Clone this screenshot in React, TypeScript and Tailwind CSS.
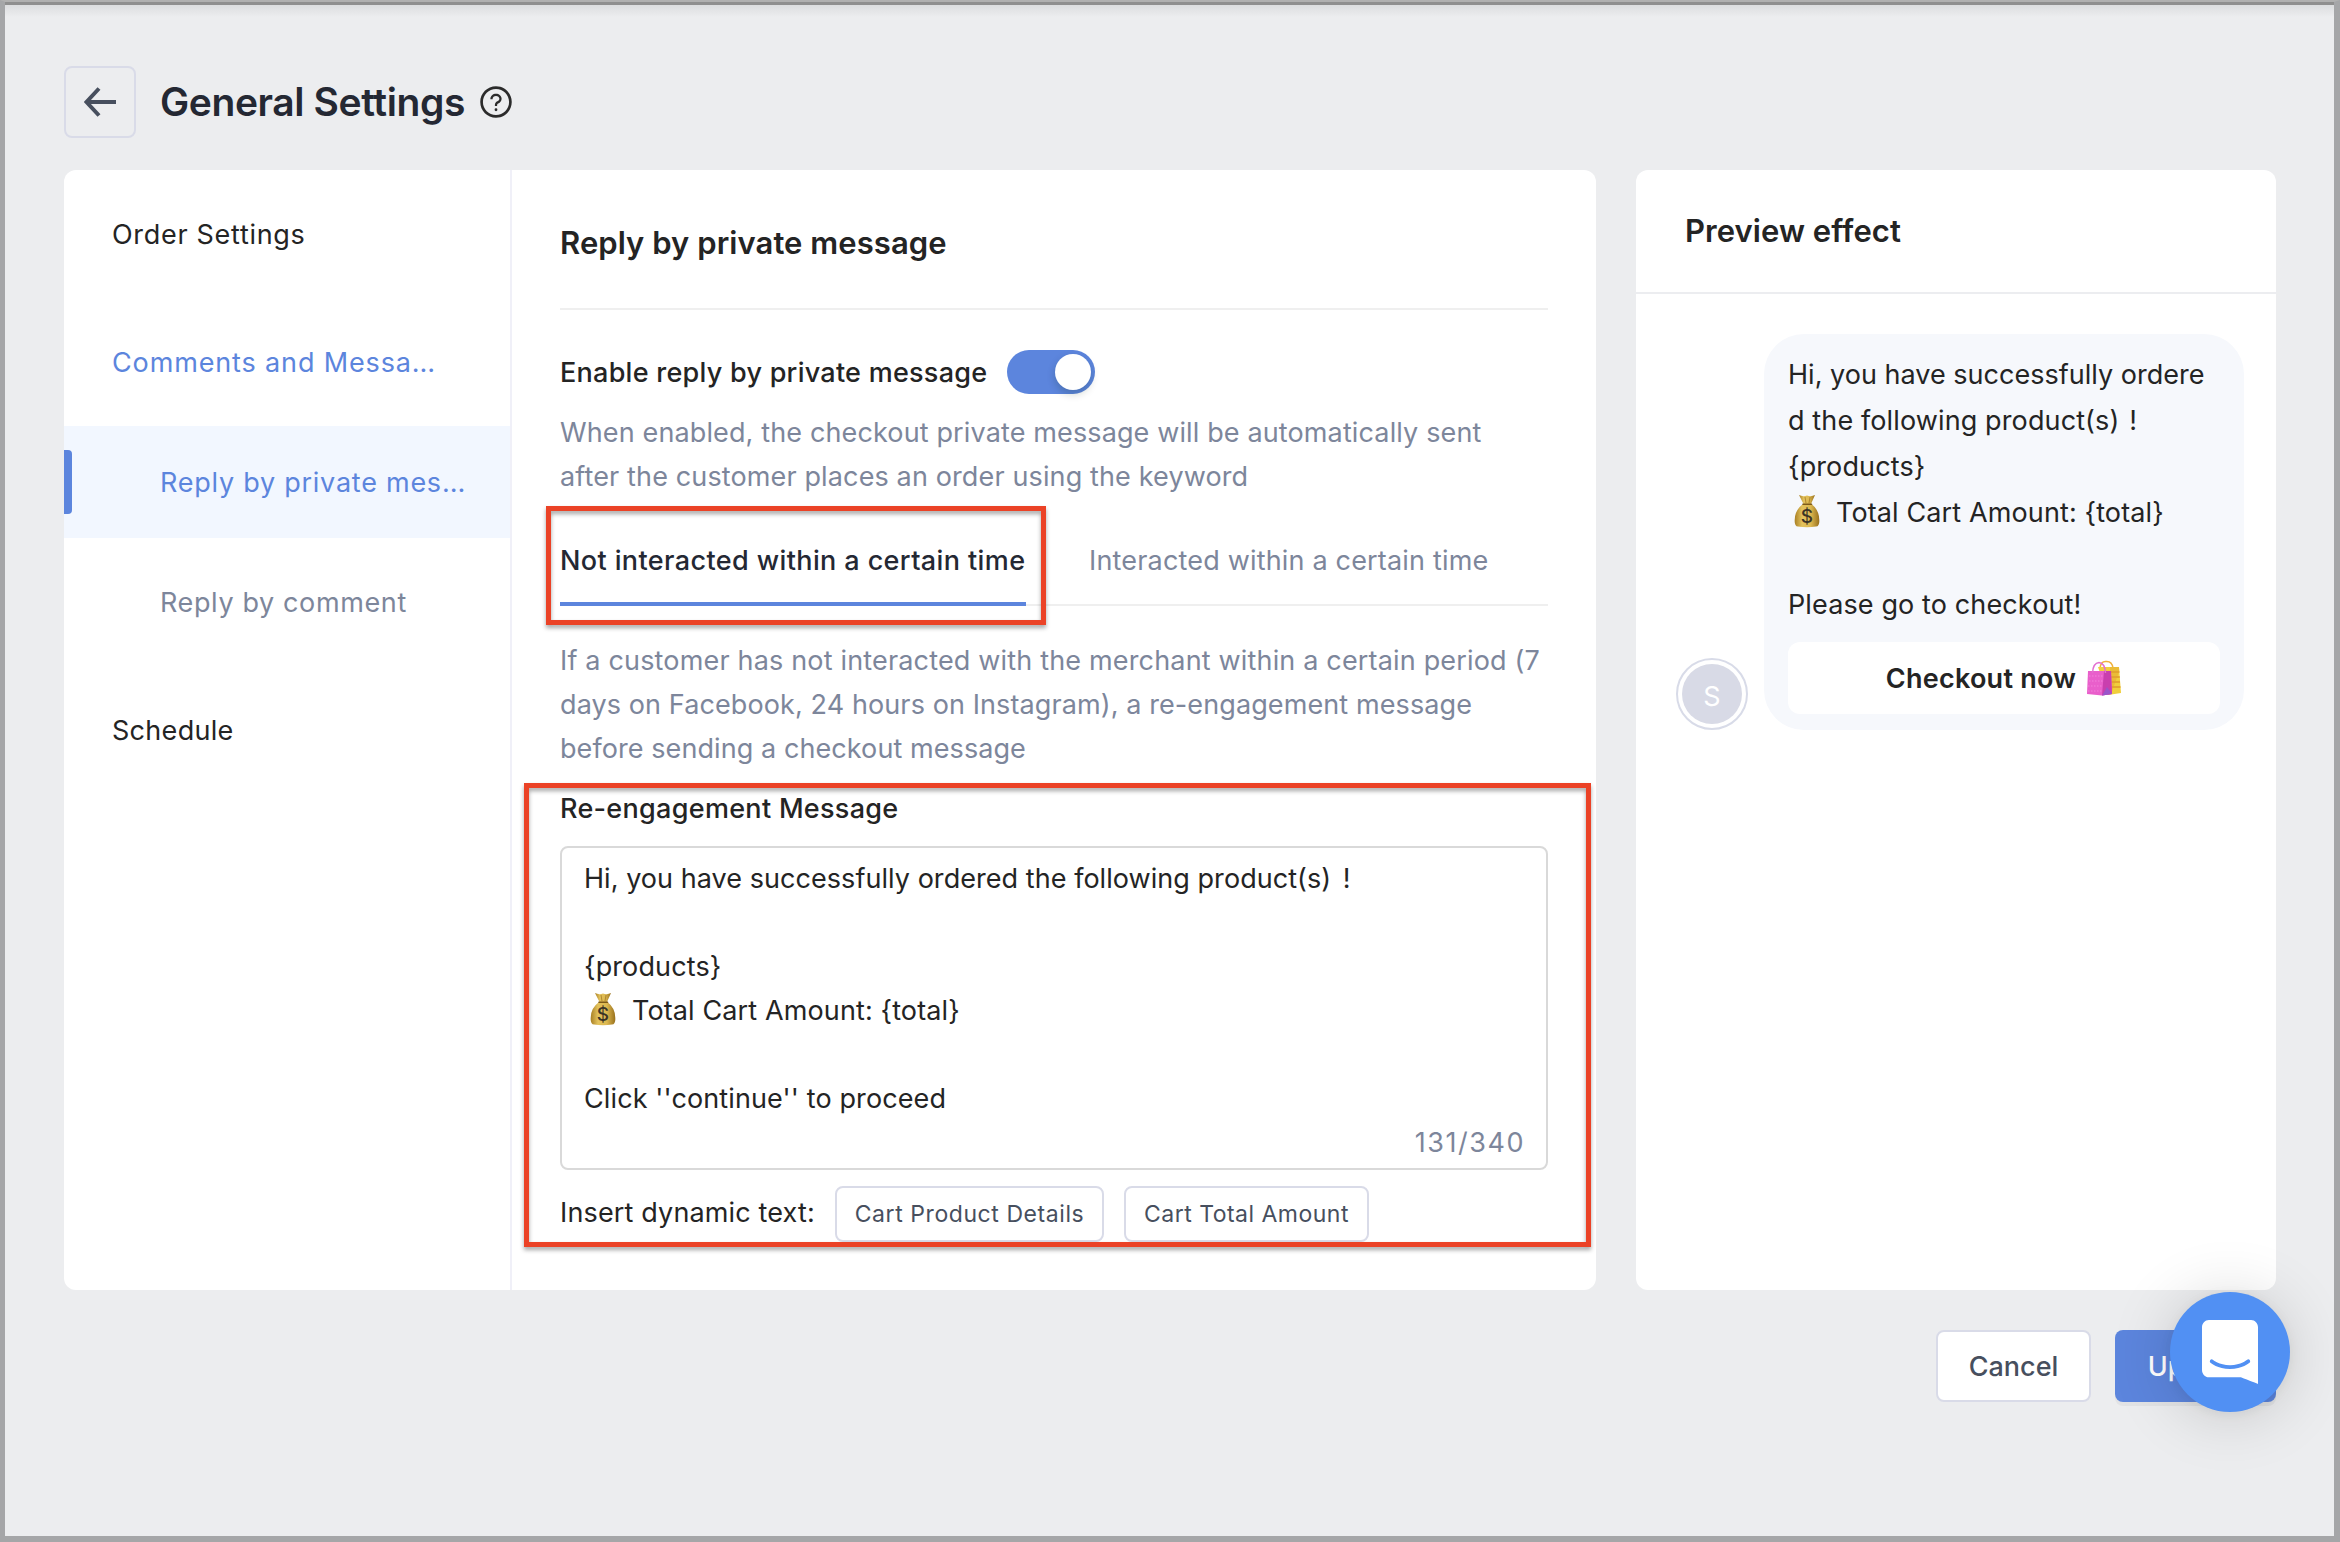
import { useState } from "react";
import clsx from "clsx";
import { AiOutlineQuestionCircle } from "react-icons/ai";

type NavItem = {
  label: string;
  child?: boolean;
  state?: "open" | "active";
  tracking: string;
};

const NAV_ITEMS: NavItem[] = [
  { label: "Order Settings", tracking: "tracking-[0.7px]" },
  { label: "Comments and Messa…", state: "open", tracking: "tracking-[0.86px]" },
  { label: "Reply by private mes…", child: true, state: "active", tracking: "tracking-[0.75px]" },
  { label: "Reply by comment", child: true, tracking: "tracking-[0.62px]" },
  { label: "Schedule", tracking: "tracking-[0.3px]" },
];

const TABS = ["Not interacted within a certain time", "Interacted within a certain time"];

function MoneyBag() {
  return (
    <svg viewBox="0 0 26 34" className="inline-block w-[26px] h-[34px] align-[-6px] ml-[6px] mr-[16px]">
      <defs>
        <linearGradient id="bag" x1="0" x2="1">
          <stop offset="0" stopColor="#a98025" />
          <stop offset="0.3" stopColor="#e3c25c" />
          <stop offset="0.65" stopColor="#ddb850" />
          <stop offset="1" stopColor="#98701c" />
        </linearGradient>
      </defs>
      <path d="M5 1 Q9 3 13 1.5 Q17 3 21 1 L17 10 H9.5 Z" fill="url(#bag)" />
      <path d="M9 10 Q1 16 0.8 25 Q0 32 4 32.6 Q13 34 22 32.6 Q26 32 25.2 25 Q25 16 17.5 10 Z" fill="url(#bag)" />
      <path d="M9 10.3 H17.5" stroke="#7d5a19" strokeWidth="1.6" strokeLinecap="round" />
      <path d="M11 3 L12 9 M16 3 L15 9" stroke="#a27a28" strokeWidth="0.8" />
      <text x="13" y="29" textAnchor="middle" fontSize="19" fontWeight="500" fill="#3b3426">
        $
      </text>
    </svg>
  );
}

function ShoppingBags() {
  return (
    <svg viewBox="0 0 36 36" className="inline-block w-[36px] h-[36px] mb-[3px] ml-[10px]">
      <path d="M14 8 Q15 1 20 1.5 Q26 1 27 8" fill="none" stroke="#f0b13c" strokeWidth="1.5" />
      <path d="M12 7 H33 L35 33 L22 35 Z" fill="#f1cf3c" />
      <path d="M24 12 H33.5 M25 17 H33.8 M25 22 H34 M25 27 H34.5" stroke="#e09a2c" strokeWidth="1.6" />
      <path d="M24 7 H33 L33.3 11 L25 34 Z" fill="#e3a52f" opacity="0.45" />
      <path d="M2 11 H25 L26 34 L16 35.5 L1 34 Z" fill="#e95fcb" />
      <path d="M18 11 H25 L26 34 L16 35.5 Z" fill="#c93fae" />
      <path d="M21 27 L26 34 L16 35.5 Z" fill="#9a55c9" />
      <path d="M3 16 H17 M3 21 H17 M2 26 H16 M2 31 H16" stroke="#f48be0" strokeWidth="0.8" strokeDasharray="1.5 1.5" />
      <path d="M6.500 13 Q7 3 13 2.500 Q19 3 19.500 13" fill="none" stroke="#e26fd0" strokeWidth="1.5" />
    </svg>
  );
}

function Sidebar() {
  return (
    <nav className="w-[448px] shrink-0 border-r-2 border-[#f0f0f8] flex flex-col">
      <div className="-mt-2">
        {NAV_ITEMS.map((item) => (
          <div
            key={item.label}
            className={clsx(
              "h-[112px] pt-0.5 flex items-center whitespace-nowrap",
              item.tracking,
              item.child ? "mt-2" : "mt-4",
              item.state === "open" && "text-[#5c85dd]",
              item.state === "active" && "bg-[#f2f7ff] text-[#5c85dd]",
              !item.state && item.child && "text-[#7d869b]",
            )}
          >
            {item.state === "active" && <span className="w-2 h-16 -mr-2 -mt-0.5 rounded-r bg-[#5c85dd]" />}
            <span className={item.child ? "ml-24" : "ml-12"}>{item.label}</span>
          </div>
        ))}
      </div>
    </nav>
  );
}

function Highlight({ className }: { className: string }) {
  return (
    <div
      className={clsx(
        "absolute border-[5px] border-[#eb4226] drop-shadow-[0_3px_2px_rgba(0,0,0,0.35)] pointer-events-none",
        className,
      )}
    />
  );
}

function ReplySettings() {
  const [enabled, setEnabled] = useState(true);
  const [tab, setTab] = useState(0);

  return (
    <section className="flex-1 px-12">
      <h2 className="h-[140px] pt-[9px] flex items-center border-b-2 border-[#efefef] text-[31px] font-semibold tracking-[0.06px] whitespace-nowrap">
        Reply by private message
      </h2>

      <div className="mt-10 h-11 flex items-center">
        <span className="w-[447px] pt-0.5 font-medium tracking-[0.26px] whitespace-nowrap">
          Enable reply by private message
        </span>
        <button
          onClick={() => setEnabled(!enabled)}
          className={clsx(
            "w-[88px] h-11 rounded-full p-1 flex",
            enabled ? "bg-[#5c85dd] justify-end" : "bg-gray-300 justify-start",
          )}
        >
          <span className="size-9 rounded-full bg-white shadow-[0_4px_8px_rgba(0,35,11,0.2)]" />
        </button>
      </div>

      <p className="mt-[17px] text-[#7d869b] leading-[44px] tracking-[0.13px] whitespace-nowrap">
        When enabled, the checkout private message will be automatically sent
        <br />
        after the customer places an order using the keyword
      </p>

      <div className="relative mt-[15px] h-[92px] flex gap-[63px] border-b-2 border-[#efefef]">
        {TABS.map((label, i) => (
          <button
            key={label}
            onClick={() => setTab(i)}
            className={clsx(
              "h-[92px] whitespace-nowrap",
              i === tab
                ? "w-[466px] pt-1.5 text-left font-medium tracking-[0.39px] text-[#242833] border-b-4 border-[#5c85dd]"
                : "pt-0.5 tracking-[0.18px] text-[#7d869b]",
            )}
          >
            {label}
          </button>
        ))}
        <Highlight className="-left-[14px] -top-2 w-[500px] h-[119px]" />
      </div>

      <p className="mt-[33px] text-[#7d869b] leading-[44px] tracking-[0.17px] whitespace-nowrap">
        If a customer has not interacted with the merchant within a certain period (7
        <br />
        <span className="tracking-[0.1px]">days on Facebook, 24 hours on Instagram), a re-engagement message</span>
        <br />
        <span className="tracking-[0.08px]">before sending a checkout message</span>
      </p>

      <div className="relative mt-[15px]">
        <h3 className="pt-px leading-[44px] font-medium tracking-[0.3px]">Re-engagement Message</h3>
        <div className="mt-[15px] h-[324px] border-2 border-[#d9d9d9] rounded-lg px-[22px] pt-[9px] flex flex-col leading-[44px]">
          <p className="flex-1 tracking-[0.12px] whitespace-nowrap">
            <span className="tracking-[0.05px]">
              Hi, you have successfully ordered the following product(s) <span className="ml-[4px]">!</span>
            </span>
            <br />
            <br />
            {"{products}"}
            <br />
            <MoneyBag />
            Total Cart Amount: {"{total}"}
            <br />
            <br />
            Click ''continue'' to proceed
          </p>
          <span className="self-end -mr-px mb-2.5 text-[#7d869b] tracking-[1.55px]">131/340</span>
        </div>
        <div className="mt-4 h-14 flex items-center">
          <span className="w-[275px] pb-0.5 tracking-[0.15px]">Insert dynamic text:</span>
          <button className="w-[269px] h-14 mr-5 rounded-lg border-2 border-[#d9dbe8] text-[23px] tracking-[0.57px] text-[#474f5e]">
            Cart Product Details
          </button>
          <button className="w-[245px] h-14 rounded-lg border-2 border-[#d9dbe8] text-[23px] tracking-[0.48px] text-[#474f5e]">
            Cart Total Amount
          </button>
        </div>
        <Highlight className="-left-9 -top-[3px] w-[1067px] h-[464px]" />
      </div>
    </section>
  );
}

function Preview() {
  return (
    <aside className="w-[640px] rounded-xl bg-white">
      <h2 className="h-[124px] pl-[49px] flex items-center border-b-2 border-[#ecedf0] text-[31px] font-semibold tracking-[0.06px]">
        Preview effect
      </h2>
      <div className="mt-10 pl-10 flex items-end gap-4">
        <div className="size-[72px] rounded-full border-2 border-[#d8dbe8] p-1">
          <div className="size-full rounded-full bg-[#d8dae6] text-white flex items-center justify-center pt-1.5">S</div>
        </div>
        <div className="w-[480px] rounded-[40px] bg-[#f6f8fc] px-6 pt-[18px] pb-4">
          <p className="leading-[46px] tracking-[0.12px] whitespace-nowrap">
            <span className="tracking-[0.02px]">Hi, you have successfully ordere</span>
            <br />
            d the following product(s) <span className="ml-[2px]">!</span>
            <br />
            {"{products}"}
            <br />
            <MoneyBag />
            Total Cart Amount: {"{total}"}
            <br />
            <br />
            Please go to checkout!
          </p>
          <div className="mt-[14px] h-[72px] pt-0.5 rounded-xl bg-white flex items-center justify-center font-semibold tracking-[0.25px]">
            Checkout now
            <ShoppingBags />
          </div>
        </div>
      </div>
    </aside>
  );
}

function ChatLauncher() {
  return (
    <button className="absolute right-[44px] bottom-[124px] size-[120px] rounded-full bg-[#5190f3] flex items-center justify-center shadow-[0_2px_12px_rgba(0,0,0,0.06),0_4px_64px_rgba(0,0,0,0.16)]">
      <svg viewBox="0 0 28 32" className="w-14 h-16" fill="#fff">
        <path d="M28 32s-4.714-1.855-8.527-3.34H3.437C1.54 28.66 0 27.026 0 25.013V3.644C0 1.633 1.54 0 3.437 0h21.125c1.898 0 3.437 1.632 3.437 3.645v18.404H28V32zm-4.139-11.982a.88.88 0 00-1.292-.105c-.03.026-3.015 2.681-8.57 2.681-5.486 0-8.517-2.636-8.571-2.684a.88.88 0 00-1.29.107 1.01 1.01 0 00-.219.708.992.992 0 00.318.664c.142.128 3.537 3.15 9.762 3.15 6.226 0 9.621-3.022 9.763-3.15a.992.992 0 00.317-.664 1.01 1.01 0 00-.218-.707z" />
      </svg>
    </button>
  );
}

export default function App() {
  return (
    <div className="relative w-[2340px] h-[1542px] overflow-hidden bg-[#ecedef] border-[5px] border-t-2 border-r-[6px] border-b-[6px] border-[#a5a6a8] border-t-[#b0b0b0] font-['Inter',sans-serif] text-[27px] text-[#242424]">
      <div className="h-[3px] bg-[#8f8f8f]" />
      <div className="h-3 bg-linear-to-b from-[#dcdddf] to-[#ecedef]" />
      <div className="pl-[59px] pr-[58px]">
        <header className="mt-[49px] h-[72px] flex items-center">
          <button className="size-[72px] rounded-lg border-2 border-[#d9dbe8] flex items-center justify-center">
            <svg viewBox="0 0 32 30" className="w-8 h-[30px]" fill="none" stroke="#474f5e" strokeWidth="4">
              <path d="M3 15 H32 M15 1.500 L2.500 15 L15 28.500" />
            </svg>
          </button>
          <h1 className="ml-6 w-[318px] text-[39px] font-semibold tracking-[-0.4px] text-[#242833] whitespace-nowrap">
            General Settings
          </h1>
          <AiOutlineQuestionCircle className="size-9 text-[#2b2b2b]" />
        </header>

        <main className="mt-8 h-[1120px] flex gap-10">
          <div className="w-[1532px] rounded-xl bg-white flex">
            <Sidebar />
            <ReplySettings />
          </div>
          <Preview />
        </main>

        <footer className="mt-10 flex justify-end gap-6">
          <button className="w-[155px] h-[72px] pt-0.5 rounded-lg border-2 border-[#d9dbe8] bg-white font-medium text-[#474f5e]">
            Cancel
          </button>
          <button className="w-[161px] h-[72px] pt-0.5 pr-0.5 rounded-lg bg-[#5c85dd] font-medium text-white shadow-[0_4px_0_rgba(0,0,0,0.04)]">
            Update
          </button>
        </footer>
      </div>
      <ChatLauncher />
    </div>
  );
}
